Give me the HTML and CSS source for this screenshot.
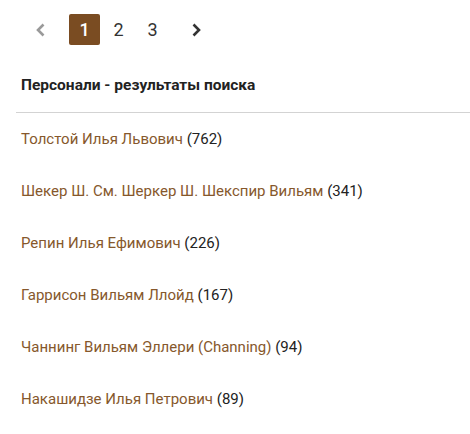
FILE: index.html
```html
<!DOCTYPE html>
<html lang="ru">
<head>
<meta charset="utf-8">
<link rel="stylesheet" href="styles.css">
</head>
<body>
<nav class="pager">
  <span class="nav prev"><svg width="11" height="14" viewBox="0 0 11 14"><path d="M8.5 1.5 L3 7 L8.5 12.5" fill="none" stroke="#9a9a9a" stroke-width="2.6"/></svg></span>
  <span class="page active">1</span>
  <span class="page">2</span>
  <span class="page">3</span>
  <span class="nav next"><svg width="11" height="14" viewBox="0 0 11 14"><path d="M2.5 1.5 L8 7 L2.5 12.5" fill="none" stroke="#333" stroke-width="2.6"/></svg></span>
</nav>
<section class="results">
  <h2 class="title">Персонали - результаты поиска</h2>
  <ul class="list">
    <li><a class="name">Толстой Илья Львович</a> (762)</li>
    <li><a class="name">Шекер Ш. См. Шеркер Ш. Шекспир Вильям</a> (341)</li>
    <li><a class="name">Репин Илья Ефимович</a> (226)</li>
    <li><a class="name">Гаррисон Вильям Ллойд</a> (167)</li>
    <li><a class="name">Чаннинг Вильям Эллери (Channing)</a> (94)</li>
    <li><a class="name">Накашидзе Илья Петрович</a> (89)</li>
  </ul>
</section>
</body>
</html>
```
FILE: styles.css
```css
html, body {
  margin: 0;
  padding: 0;
  background: #fff;
}
body {
  font-family: Roboto, "Liberation Sans", sans-serif;
  color: #222;
}
.pager {
  display: flex;
  align-items: center;
  gap: 3px;
  padding: 14px 0 0 25px;
}
.page, .nav {
  width: 31px;
  height: 31px;
  display: flex;
  align-items: center;
  justify-content: center;
  font-size: 18px;
  color: #333;
}
.prev { margin-right: 10px; }
.next { margin-left: 10px; }
.page.active {
  background: #7a4c22;
  color: #fff;
  border-radius: 2px;
  font-weight: 500;
}
.results {
  margin: 0 0 0 16px;
}
.title {
  margin: 0;
  padding: 32px 0 18px 5px;
  font-size: 15.5px;
  font-weight: 700;
  color: #222;
  border-bottom: 1px solid #d3d3d3;
  line-height: 17px;
}
.list {
  list-style: none;
  margin: 0;
  padding: 18px 0 0 5px;
}
.list li {
  font-size: 15px;
  line-height: 17px;
  height: 52px;
  color: #222;
}
.name {
  color: #86582c;
}
```
